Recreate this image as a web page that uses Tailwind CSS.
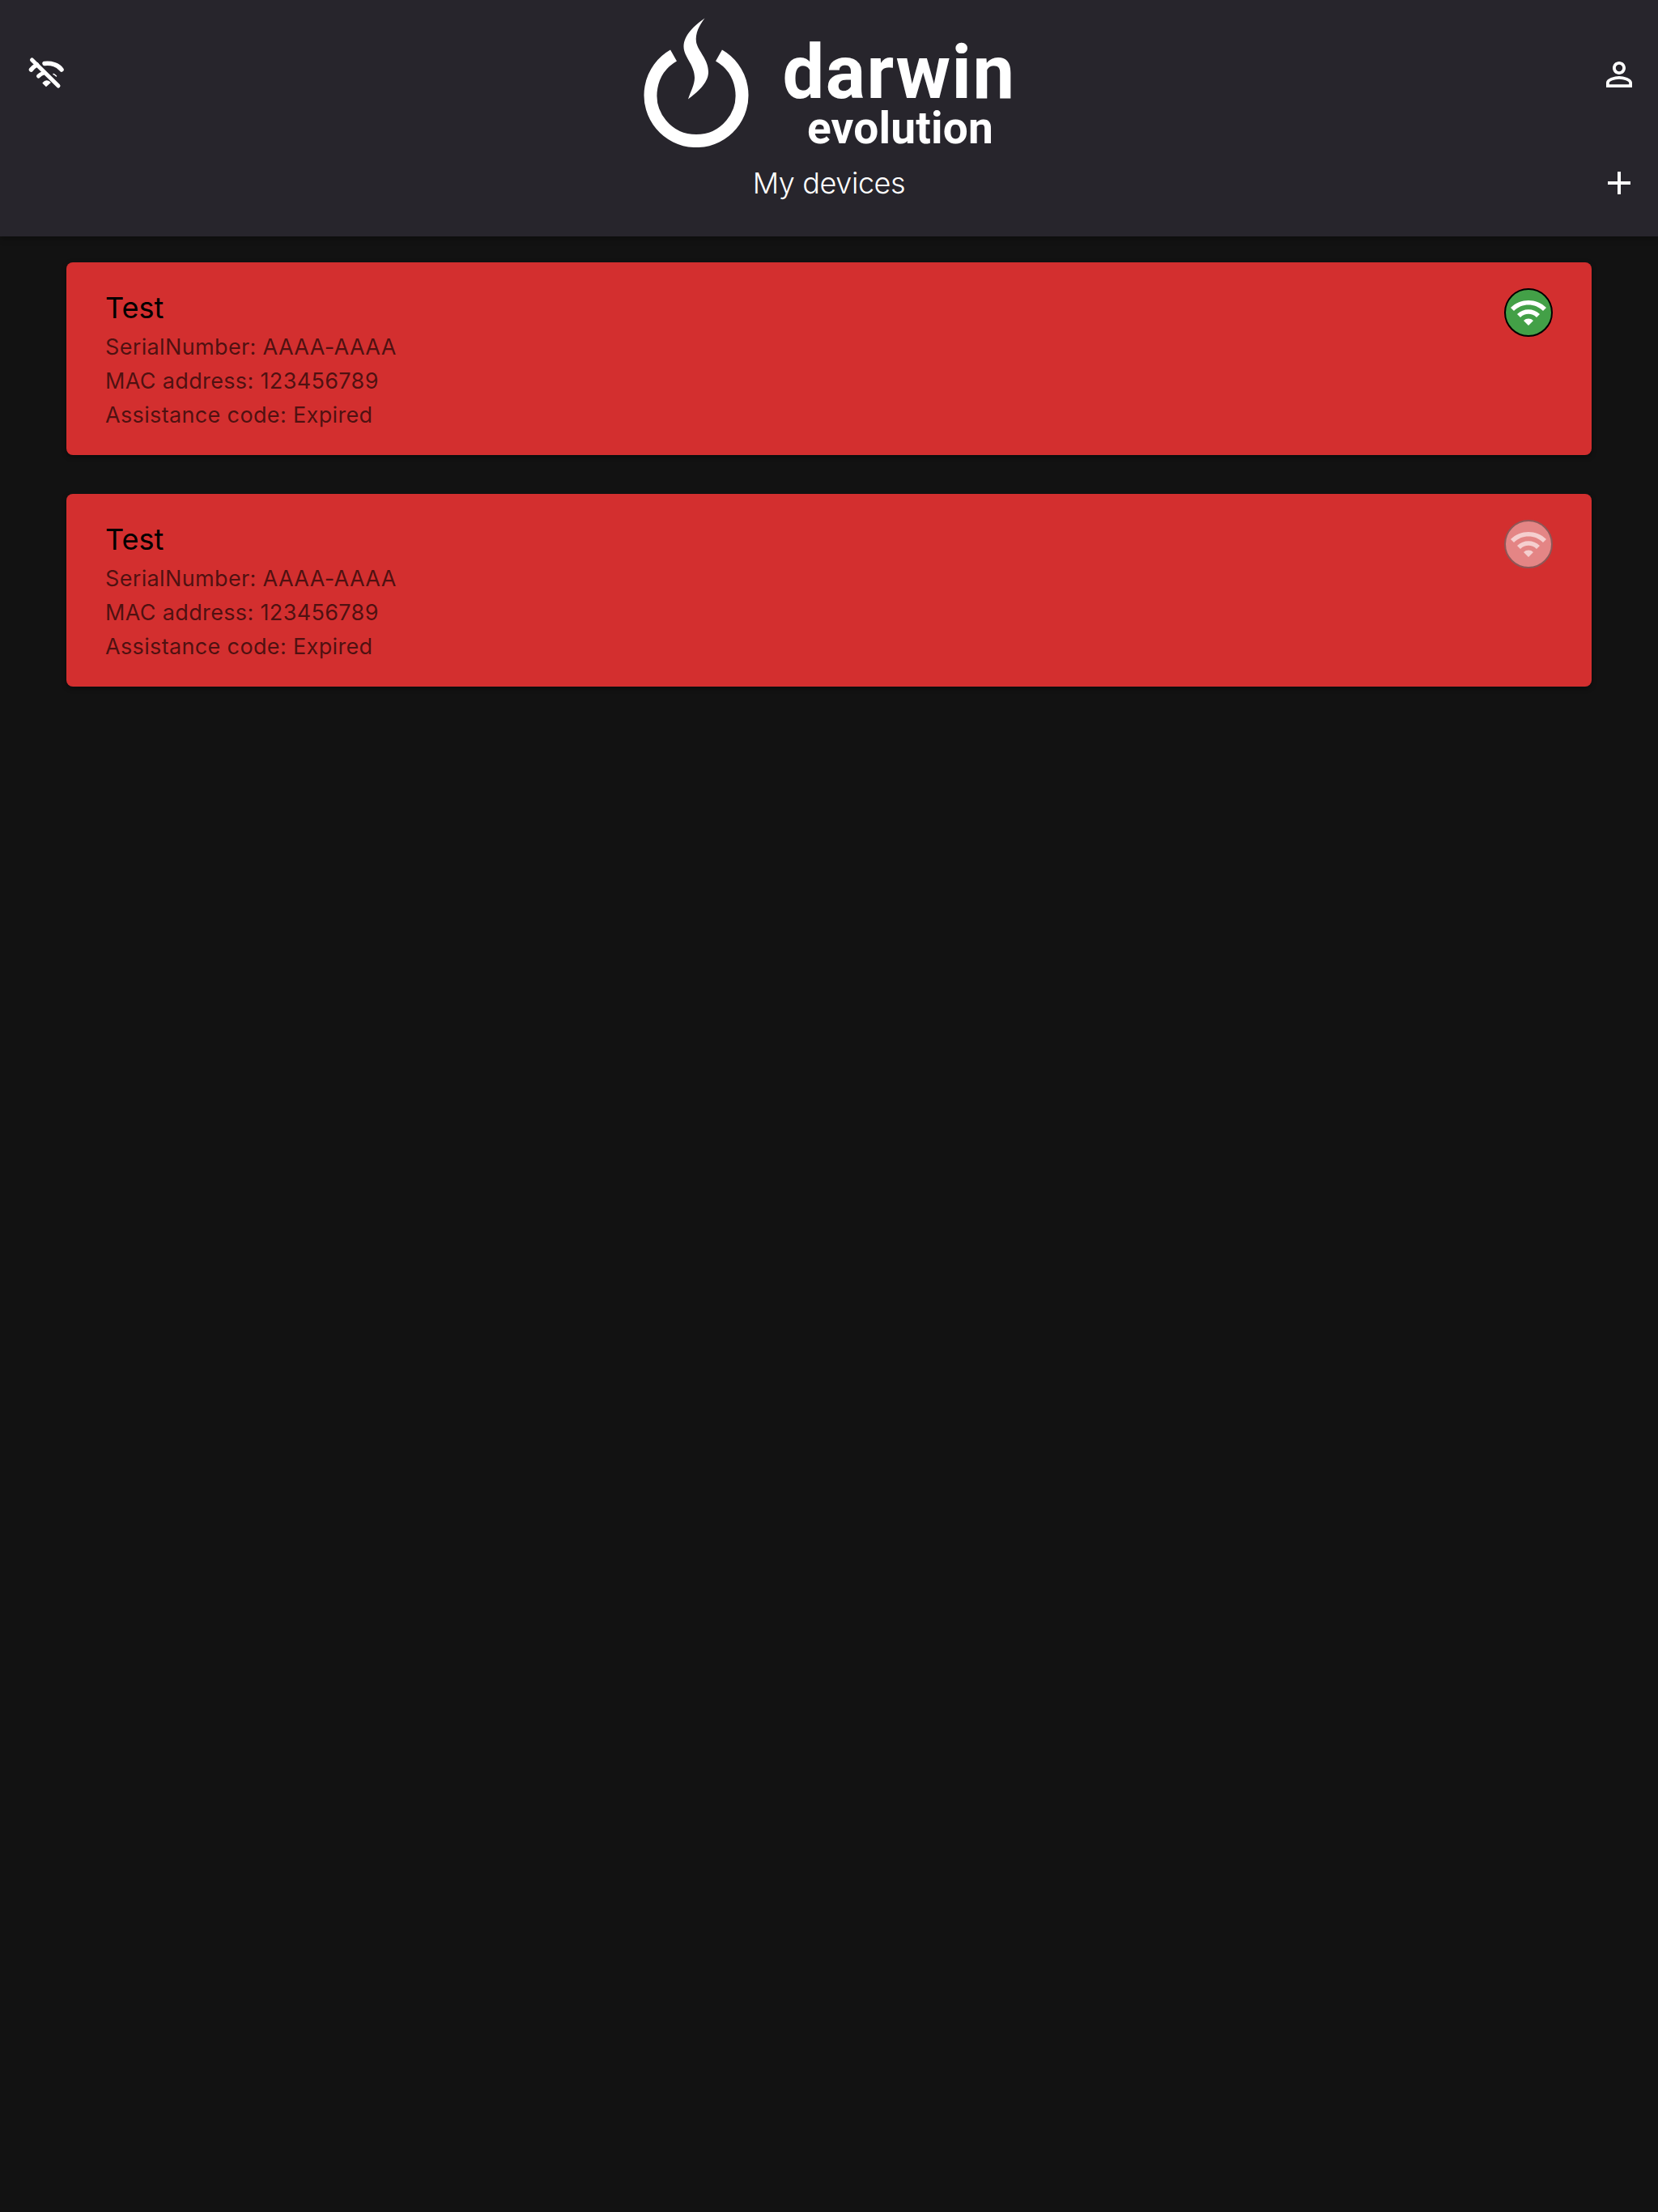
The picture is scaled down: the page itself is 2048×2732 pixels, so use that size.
<!DOCTYPE html>
<html lang="en">
<head>
<meta charset="utf-8">
<title>My devices</title>
<script src="https://cdn.jsdelivr.net/npm/@tailwindcss/browser@4"></script>
</head>
<body class="m-0 bg-[#121212] font-['Inter','Liberation_Sans',sans-serif]">
<div class="min-h-[2732px] w-[2048px] bg-[#121212]">
  <header class="relative flex h-[292px] flex-col items-center bg-[#27252c] shadow-[0_2px_8px_rgba(0,0,0,0.35)]">
    <div class="mt-[22px] flex h-[160px] w-[458px] items-start gap-[43px]">
      <svg class="h-[160px] w-[130px] shrink-0" viewBox="795 22 130 160" fill="none">
        <path d="M832 68.500A56.500 56.500 0 1 0 888 68.500" stroke="#fff" stroke-width="16"/>
        <path d="M870.500 22.500C858 31 844 44 844.500 58C845 71 858 80 858 96C858 105 853 113 850 122.500C860 115 875 103 875 89C875 73 862 63 860 52C858.500 41 864 31 870.500 22.500Z" fill="#fff"/>
      </svg>
      <div class="flex w-[285px] flex-col items-center pt-[28px] font-['Roboto',sans-serif] font-bold text-white">
        <div class="h-[80px] text-[92px] leading-[80px] tracking-[1.5px]">darwin</div>
        <div class="mt-[3px] ml-[3px] h-[50px] text-[55px] leading-[50px] tracking-[0.2px]">evolution</div>
      </div>
    </div>
    <h1 class="mt-[22px] text-[36px] leading-[44px] font-light tracking-[-0.4px] text-white">My devices</h1>
    <svg class="absolute top-[66px] left-[33px] h-[48px] w-[48px]" viewBox="33 66 48 48" fill="none" stroke="#fff" stroke-linecap="round">
      <path d="M39.500 74L72 106" stroke-width="5"/>
      <path d="M38.500 86C40.500 83.500 43 81.500 45.500 80" stroke-width="5.500"/>
      <path d="M47.500 94C49.500 92 51.500 91 54 90" stroke-width="5"/>
      <path d="M55 78.500C63 77.500 72 80 76 86" stroke-width="5.500"/>
      <path d="M66 91.500C67.500 92 68.500 93 69.500 94" stroke-width="1.500"/>
      <path d="M54 102.500L57 105.500L61 102C59 100 56 100 54 102.500Z" fill="#fff" stroke-width="2.500"/>
    </svg>
    <svg class="absolute top-[68px] right-[24px] h-[48px] w-[48px]" viewBox="0 0 24 24" fill="#fff"><path d="M12 5.900a2.100 2.100 0 1 1 0 4.200 2.100 2.100 0 0 1 0-4.200m0 9c2.970 0 6.100 1.460 6.100 2.100v1.100H5.900V17c0-.640 3.130-2.100 6.100-2.100M12 4C9.790 4 8 5.790 8 8s1.790 4 4 4 4-1.790 4-4-1.790-4-4-4zm0 9c-2.670 0-8 1.340-8 4v3h16v-3c0-2.660-5.330-4-8-4z"/></svg>
    <svg class="absolute top-[202px] right-[24px] h-[48px] w-[48px]" viewBox="0 0 24 24" fill="#fff"><path d="M19 13h-6v6h-2v-6H5v-2h6V5h2v6h6v2z"/></svg>
  </header>

  <main class="flex flex-col gap-[48px] px-[82px] pt-[32px]">
    <article class="flex h-[238px] justify-between rounded-[8px] bg-[#d32f2f] pt-[32px] pr-[48px] pl-[48px] shadow-[0_2px_6px_rgba(0,0,0,0.4)]">
      <div>
        <h2 class="mb-[4px] text-[36px] leading-[48px] font-normal text-black">Test</h2>
        <p class="text-[27px] leading-[42px] tracking-[0.35px] text-black/65">SerialNumber: AAAA-AAAA</p>
        <p class="text-[27px] leading-[42px] tracking-[0.35px] text-black/65">MAC address: 123456789</p>
        <p class="text-[27px] leading-[42px] tracking-[0.35px] text-black/65">Assistance code: Expired</p>
      </div>
      <div class="h-[60px] w-[60px] rounded-full border-2 border-black bg-[#43a047] p-[4px]">
        <svg class="h-[48px] w-[48px]" viewBox="0 0 24 24" fill="#fff"><path d="M1 9l2 2c4.970-4.970 13.030-4.970 18 0l2-2C16.930 2.930 7.080 2.930 1 9zm8 8l3 3 3-3c-1.650-1.660-4.340-1.660-6 0zm-4-4l2 2c2.760-2.760 7.240-2.760 10 0l2-2C15.140 9.140 8.870 9.140 5 13z"/></svg>
      </div>
    </article>
    <article class="flex h-[238px] justify-between rounded-[8px] bg-[#d32f2f] pt-[32px] pr-[48px] pl-[48px] shadow-[0_2px_6px_rgba(0,0,0,0.4)]">
      <div>
        <h2 class="mb-[4px] text-[36px] leading-[48px] font-normal text-black">Test</h2>
        <p class="text-[27px] leading-[42px] tracking-[0.35px] text-black/65">SerialNumber: AAAA-AAAA</p>
        <p class="text-[27px] leading-[42px] tracking-[0.35px] text-black/65">MAC address: 123456789</p>
        <p class="text-[27px] leading-[42px] tracking-[0.35px] text-black/65">Assistance code: Expired</p>
      </div>
      <div class="h-[60px] w-[60px] rounded-full border-2 border-[#8e5757] bg-[#e48585] p-[4px]">
        <svg class="h-[48px] w-[48px]" viewBox="0 0 24 24" fill="#f5cfcf"><path d="M1 9l2 2c4.970-4.970 13.030-4.970 18 0l2-2C16.930 2.930 7.080 2.930 1 9zm8 8l3 3 3-3c-1.650-1.660-4.340-1.660-6 0zm-4-4l2 2c2.760-2.760 7.240-2.760 10 0l2-2C15.140 9.140 8.870 9.140 5 13z"/></svg>
      </div>
    </article>
  </main>
</div>
</body>
</html>
